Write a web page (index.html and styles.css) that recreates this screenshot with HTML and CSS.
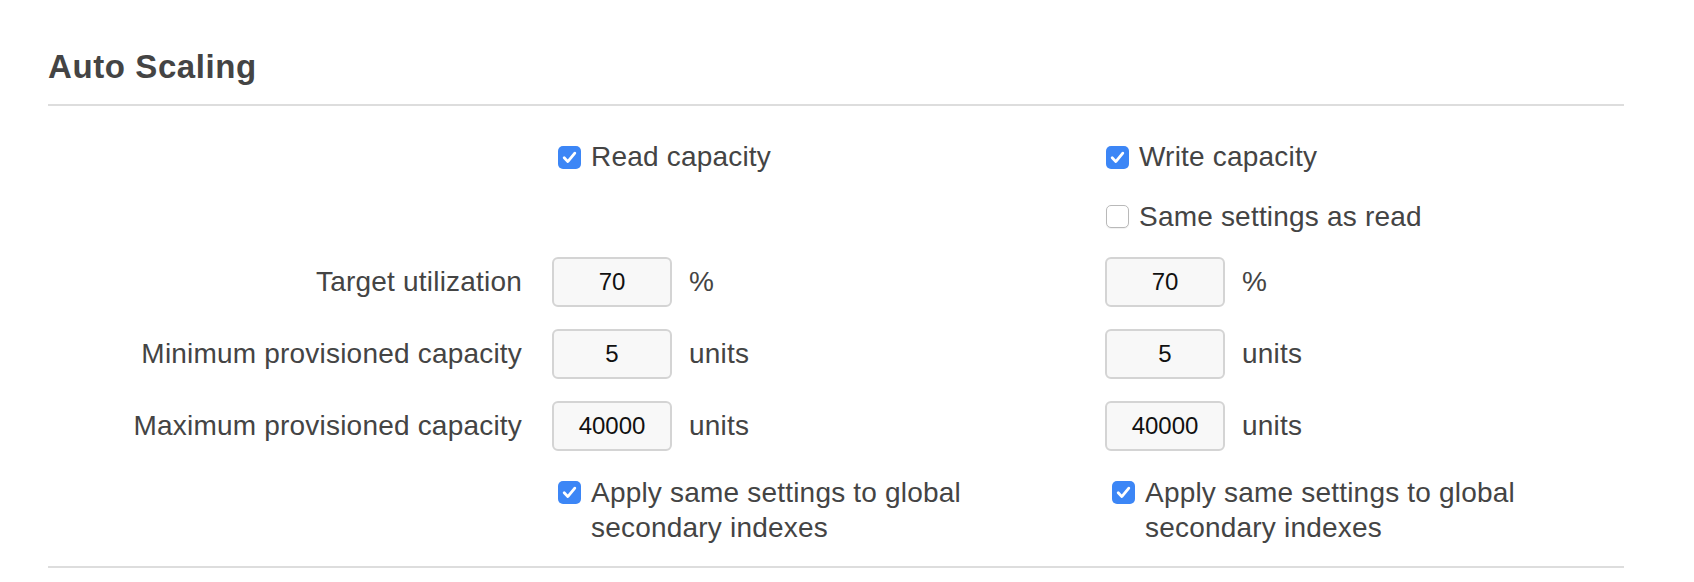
FILE: index.html
```html
<!DOCTYPE html>
<html lang="en">
<head>
<meta charset="utf-8">
<title>Auto Scaling</title>
<link rel="stylesheet" href="styles.css">
</head>
<body>
<div class="page">
  <header class="section-head">
    <h2 class="title">Auto Scaling</h2>
  </header>
  <div class="form">
    <div class="spacer"></div>
    <label class="check check-c1">
      <span class="cb cb-on"><svg viewBox="0 0 23 23" width="23" height="23"><path d="M6.2 11.8 L9.8 15.6 L16.8 7.2" fill="none" stroke="#fff" stroke-width="2.8" stroke-linecap="round" stroke-linejoin="round"/></svg></span>
      <span class="check-text">Read capacity</span>
    </label>
    <label class="check check-c2">
      <span class="cb cb-on"><svg viewBox="0 0 23 23" width="23" height="23"><path d="M6.2 11.8 L9.8 15.6 L16.8 7.2" fill="none" stroke="#fff" stroke-width="2.8" stroke-linecap="round" stroke-linejoin="round"/></svg></span>
      <span class="check-text">Write capacity</span>
    </label>

    <div class="spacer"></div>
    <div class="spacer"></div>
    <label class="check check-c2">
      <span class="cb cb-off"></span>
      <span class="check-text">Same settings as read</span>
    </label>

    <div class="label">Target utilization</div>
    <div class="field"><input class="num" type="text" value="70"><span class="unit">%</span></div>
    <div class="field"><input class="num" type="text" value="70"><span class="unit">%</span></div>

    <div class="label">Minimum provisioned capacity</div>
    <div class="field"><input class="num" type="text" value="5"><span class="unit">units</span></div>
    <div class="field"><input class="num" type="text" value="5"><span class="unit">units</span></div>

    <div class="label">Maximum provisioned capacity</div>
    <div class="field"><input class="num" type="text" value="40000"><span class="unit">units</span></div>
    <div class="field"><input class="num" type="text" value="40000"><span class="unit">units</span></div>

    <div class="spacer"></div>
    <label class="check check-multi check-c1">
      <span class="cb cb-on"><svg viewBox="0 0 23 23" width="23" height="23"><path d="M6.2 11.8 L9.8 15.6 L16.8 7.2" fill="none" stroke="#fff" stroke-width="2.8" stroke-linecap="round" stroke-linejoin="round"/></svg></span>
      <span class="check-text">Apply same settings to global secondary indexes</span>
    </label>
    <label class="check check-multi check-c2b">
      <span class="cb cb-on"><svg viewBox="0 0 23 23" width="23" height="23"><path d="M6.2 11.8 L9.8 15.6 L16.8 7.2" fill="none" stroke="#fff" stroke-width="2.8" stroke-linecap="round" stroke-linejoin="round"/></svg></span>
      <span class="check-text">Apply same settings to global secondary indexes</span>
    </label>
  </div>
</div>
</body>
</html>
```

FILE: styles.css
```css
html, body {
  margin: 0;
  padding: 0;
  background: #fff;
}

body {
  font-family: "Liberation Sans", Arial, Helvetica, sans-serif;
  color: #444;
}

.page {
  margin-left: 48px;
  width: 1576px;
}

.section-head {
  padding-top: 47px;
  padding-bottom: 17px;
  border-bottom: 2px solid #dddddd;
}

.title {
  margin: 0;
  font-size: 33px;
  line-height: 40px;
  font-weight: 700;
  letter-spacing: 0.6px;
  color: #444;
}

.form {
  display: grid;
  grid-template-columns: 474px 523px 1fr;
  grid-template-rows: 38px 37px 50px 50px 50px auto;
  column-gap: 30px;
  row-gap: 22px;
  padding-top: 32px;
  padding-bottom: 21px;
  border-bottom: 2px solid #dddddd;
  font-size: 28px;
}

.label {
  text-align: right;
  align-self: center;
  line-height: 36px;
  white-space: nowrap;
  letter-spacing: 0.2px;
}

.field {
  display: flex;
  align-items: center;
  gap: 17px;
}

.num {
  box-sizing: border-box;
  width: 120px;
  height: 50px;
  margin: 0;
  padding: 0 6px;
  border: 2px solid #d4d4d4;
  border-radius: 6px;
  background: #f8f8f8;
  font-family: "Liberation Sans", Arial, Helvetica, sans-serif;
  font-size: 24px;
  color: #111;
  text-align: center;
  outline: none;
}

.unit {
  line-height: 36px;
  letter-spacing: 0.2px;
}

.check {
  display: flex;
  align-items: center;
  gap: 10px;
  line-height: 38px;
  letter-spacing: 0.2px;
}

.check-c1 {
  padding-left: 6px;
}

.check-c2 {
  padding-left: 1px;
}

.check-c2b {
  padding-left: 7px;
}

.check-multi {
  align-items: flex-start;
  margin-top: 2px;
  line-height: 35px;
}

.check-multi .check-text {
  max-width: 440px;
}

.check-multi .cb {
  margin-top: 6px;
}

.cb {
  box-sizing: border-box;
  flex: none;
  display: block;
  width: 23px;
  height: 23px;
  border-radius: 5px;
}

.cb svg {
  display: block;
}

.cb-on {
  background: #3c86f6;
}

.cb-off {
  background: #fff;
  border: 1.5px solid #b9b9b9;
  box-shadow: 0 1px 1px rgba(0, 0, 0, 0.06);
}
```
